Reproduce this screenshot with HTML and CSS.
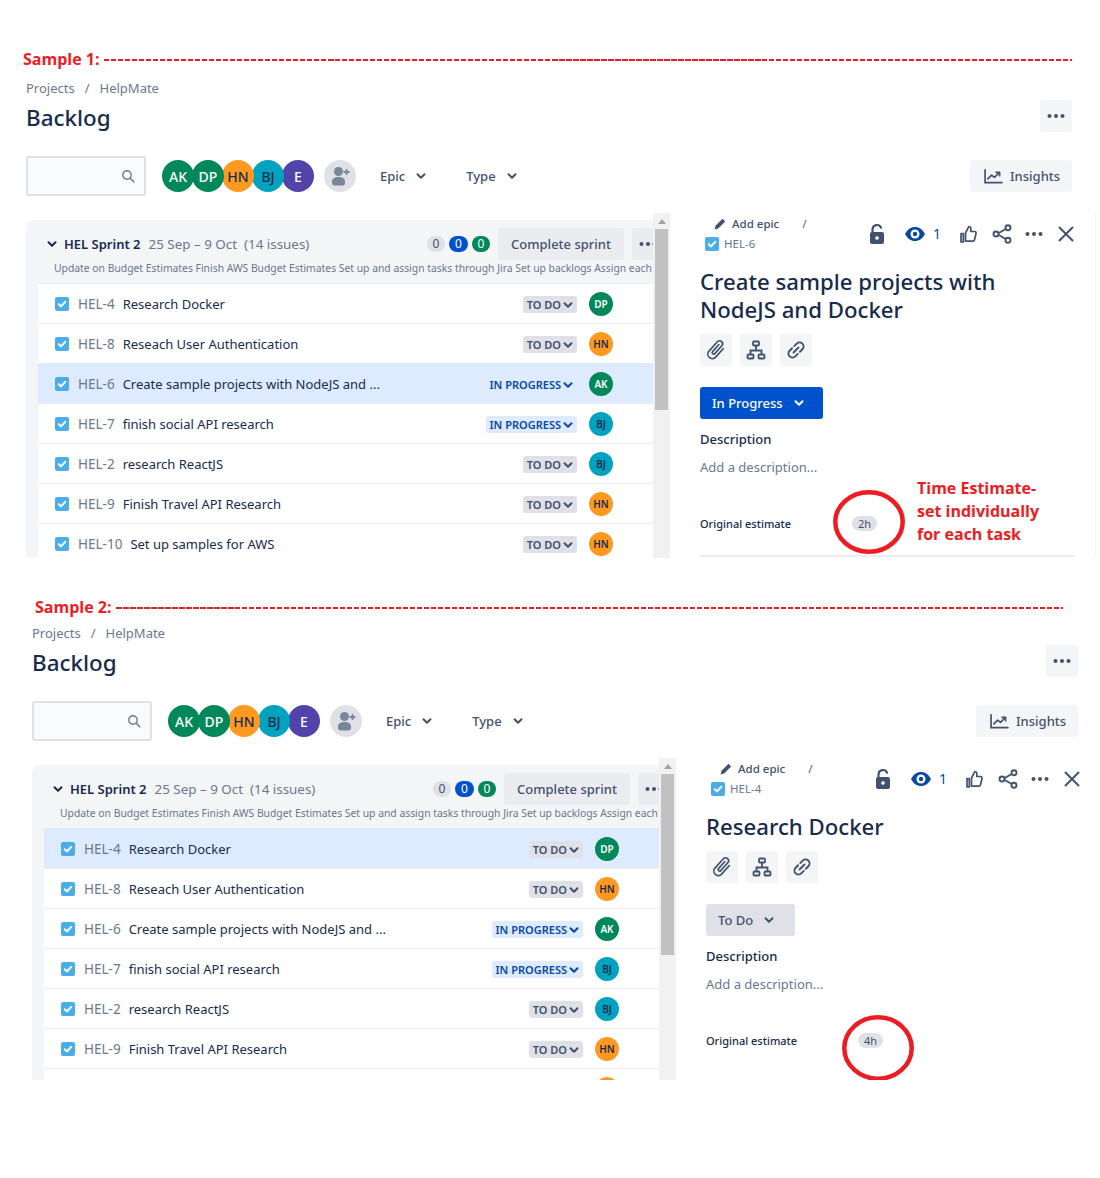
FILE: index.html
```html
<!DOCTYPE html>
<html lang="en">
<head>
<meta charset="UTF-8">
<meta name="viewport" content="width=device-width, initial-scale=1.0">
<title>Backlog samples</title>
<link rel="stylesheet" href="styles.css">
</head>
<body>
	<!-- shared icons -->
	<svg class="icon-sprite" aria-hidden="true">
		<symbol id="i-task" viewBox="0 0 14 14"><rect width="14" height="14" rx="2" fill="#4bade8"/><path d="M3.8 7.2l2.2 2.2 4.2-4.6" fill="none" stroke="#fff" stroke-width="2" stroke-linecap="round" stroke-linejoin="round"/></symbol>
		<symbol id="i-chevron" viewBox="0 0 10 10"><path d="M1.5 3.2L5 6.7l3.5-3.5" fill="none" stroke="currentColor" stroke-width="2" stroke-linecap="round" stroke-linejoin="round"/></symbol>
		<symbol id="i-search" viewBox="0 0 14 14"><circle cx="6" cy="6" r="4.2" fill="none" stroke="currentColor" stroke-width="1.4"/><path d="M9.2 9.2l3.6 3.6" stroke="currentColor" stroke-width="1.6" stroke-linecap="round"/></symbol>
		<symbol id="i-add-user" viewBox="0 0 32 32"><circle cx="16" cy="16" r="16" fill="#dfe1e6"/><circle cx="14.500" cy="11.500" r="4.500" fill="#7a869a"/><path d="M8 21.500c0-3 2.500-4.500 6.500-4.500s6.500 1.500 6.500 4.500v1.500c0 1.600-1 2.500-2.500 2.500h-8C9 25.500 8 24.600 8 23z" fill="#7a869a"/><path d="M22.500 9v6M19.500 12h6" stroke="#7a869a" stroke-width="1.800"/></symbol>
		<symbol id="i-insights" viewBox="0 0 20 16"><path d="M1 1v13.500h18" fill="none" stroke="currentColor" stroke-width="1.800" stroke-linecap="round"/><path d="M4 10.500l4-4 3 2.500 5-5M12.800 3.500h3.700v3.700" fill="none" stroke="currentColor" stroke-width="1.800" stroke-linecap="round" stroke-linejoin="round"/></symbol>
		<symbol id="i-dots" viewBox="0 0 24 24"><circle cx="5.500" cy="12" r="2" fill="currentColor"/><circle cx="12" cy="12" r="2" fill="currentColor"/><circle cx="18.500" cy="12" r="2" fill="currentColor"/></symbol>
		<symbol id="i-pencil" viewBox="0 0 12 12"><path d="M8.500.8l2.700 2.700-7 7L.6 11.400l.9-3.600z" fill="currentColor"/></symbol>
		<symbol id="i-lock" viewBox="0 0 24 24"><path d="M7.500 11V7.500a4.500 4.500 0 0 1 8.600-1.800" fill="none" stroke="currentColor" stroke-width="2.200" stroke-linecap="round"/><rect x="5" y="10" width="14" height="12" rx="2" fill="currentColor"/><circle cx="12" cy="16" r="1.800" fill="#fff"/></symbol>
		<symbol id="i-eye" viewBox="0 0 24 24"><path d="M2 12c2.400-4.600 5.800-7 10-7s7.600 2.400 10 7c-2.400 4.600-5.800 7-10 7s-7.600-2.400-10-7z" fill="#0747a6"/><circle cx="12" cy="12" r="4.500" fill="#fff"/><circle cx="12" cy="12" r="2.200" fill="#0747a6"/></symbol>
		<symbol id="i-thumb" viewBox="0 0 24 24"><path d="M9.500 11l3-5.800c.5-.9 2.300-.5 2.300 1.200v3.100h3.700c1.100 0 1.800 1 1.500 2l-1.500 6.300c-.2.800-.9 1.400-1.700 1.400H9.500zM5 11.500h2.300v8.500H5z" fill="none" stroke="currentColor" stroke-width="1.700" stroke-linejoin="round"/></symbol>
		<symbol id="i-share" viewBox="0 0 24 24"><path d="M7 12l10-5.800M7 12l10 5.800" stroke="currentColor" stroke-width="1.900"/><circle cx="6" cy="12" r="2.500" fill="#fff" stroke="currentColor" stroke-width="1.900"/><circle cx="18" cy="5.700" r="2.500" fill="#fff" stroke="currentColor" stroke-width="1.900"/><circle cx="18" cy="18.300" r="2.500" fill="#fff" stroke="currentColor" stroke-width="1.900"/></symbol>
		<symbol id="i-close" viewBox="0 0 24 24"><path d="M5.500 5.500l13 13M18.500 5.500l-13 13" stroke="currentColor" stroke-width="2" stroke-linecap="round"/></symbol>
		<symbol id="i-clip" viewBox="0 0 24 24"><path d="M16.500 6v11.500a4.500 4.500 0 0 1-9 0V5a3 3 0 0 1 6 0v10.500a1.500 1.500 0 0 1-3 0V6" transform="rotate(42 12 12)" fill="none" stroke="currentColor" stroke-width="1.700" stroke-linecap="round"/></symbol>
		<symbol id="i-tree" viewBox="0 0 24 24"><path d="M12 8v4.500M6.500 16.500v-4h11v4" fill="none" stroke="currentColor" stroke-width="1.800"/><rect x="9" y="3.500" width="6" height="4" rx="1" fill="none" stroke="currentColor" stroke-width="1.800"/><rect x="3.500" y="16.500" width="6" height="4" rx="1" fill="none" stroke="currentColor" stroke-width="1.800"/><rect x="14.500" y="16.500" width="6" height="4" rx="1" fill="none" stroke="currentColor" stroke-width="1.800"/></symbol>
		<symbol id="i-link" viewBox="0 0 24 24"><g transform="rotate(-45 12 12)" fill="none" stroke="currentColor" stroke-width="1.900" stroke-linecap="round"><path d="M10.500 8H7a4 4 0 0 0 0 8h3.500"/><path d="M13.500 8H17a4 4 0 0 1 0 8h-3.500"/><path d="M8.500 12h7"/></g></symbol>
	</svg>

	<section class="sample sample-one">
		<div class="sample-label"><span>Sample 1:</span><i class="dashes"></i></div>
		<div class="screen">
			<header class="page-head">
				<div>
					<div class="crumbs"><span>Projects</span><span>/</span><span>HelpMate</span></div>
					<h1>Backlog</h1>
				</div>
				<button class="soft-btn square"><svg class="ico-24"><use href="#i-dots"/></svg></button>
			</header>

			<div class="toolbar">
				<div class="search"><svg class="ico-14"><use href="#i-search"/></svg></div>
				<div class="people">
					<span class="avatar green">AK</span>
					<span class="avatar green">DP</span>
					<span class="avatar orange">HN</span>
					<span class="avatar teal">BJ</span>
					<span class="avatar purple">E</span>
				</div>
				<svg class="add-user"><use href="#i-add-user"/></svg>
				<span class="filter">Epic <svg class="ico-10"><use href="#i-chevron"/></svg></span>
				<span class="filter">Type <svg class="ico-10"><use href="#i-chevron"/></svg></span>
				<button class="soft-btn insights"><svg class="ico-insights"><use href="#i-insights"/></svg>Insights</button>
			</div>

			<div class="board">
				<div class="backlog">
					<div class="sprint">
						<div class="sprint-head">
							<svg class="ico-10 sprint-toggle"><use href="#i-chevron"/></svg>
							<strong>HEL Sprint 2</strong>
							<span class="sprint-dates">25 Sep – 9 Oct&nbsp; (14 issues)</span>
							<div class="sprint-actions">
								<span class="count">0</span>
								<span class="count blue">0</span>
								<span class="count green">0</span>
								<button class="soft-btn darker complete">Complete sprint</button>
								<button class="soft-btn darker square"><svg class="ico-24"><use href="#i-dots"/></svg></button>
							</div>
						</div>
						<p class="sprint-goal">Update on Budget Estimates Finish AWS Budget Estimates Set up and assign tasks through Jira Set up backlogs Assign each</p>

						<div class="issue"><svg class="ico-14"><use href="#i-task"/></svg><span class="key">HEL-4</span><span class="summary">Research Docker</span><span class="pill">TO DO <svg class="ico-10"><use href="#i-chevron"/></svg></span><span class="avatar small green">DP</span></div>
						<div class="issue"><svg class="ico-14"><use href="#i-task"/></svg><span class="key">HEL-8</span><span class="summary">Reseach User Authentication</span><span class="pill">TO DO <svg class="ico-10"><use href="#i-chevron"/></svg></span><span class="avatar small orange">HN</span></div>
						<div class="issue selected"><svg class="ico-14"><use href="#i-task"/></svg><span class="key">HEL-6</span><span class="summary">Create sample projects with NodeJS and ...</span><span class="pill progress">IN PROGRESS <svg class="ico-10"><use href="#i-chevron"/></svg></span><span class="avatar small green">AK</span></div>
						<div class="issue"><svg class="ico-14"><use href="#i-task"/></svg><span class="key">HEL-7</span><span class="summary">finish social API research</span><span class="pill progress">IN PROGRESS <svg class="ico-10"><use href="#i-chevron"/></svg></span><span class="avatar small teal">BJ</span></div>
						<div class="issue"><svg class="ico-14"><use href="#i-task"/></svg><span class="key">HEL-2</span><span class="summary">research ReactJS</span><span class="pill">TO DO <svg class="ico-10"><use href="#i-chevron"/></svg></span><span class="avatar small teal">BJ</span></div>
						<div class="issue"><svg class="ico-14"><use href="#i-task"/></svg><span class="key">HEL-9</span><span class="summary">Finish Travel API Research</span><span class="pill">TO DO <svg class="ico-10"><use href="#i-chevron"/></svg></span><span class="avatar small orange">HN</span></div>
						<div class="issue"><svg class="ico-14"><use href="#i-task"/></svg><span class="key">HEL-10</span><span class="summary">Set up samples for AWS</span><span class="pill">TO DO <svg class="ico-10"><use href="#i-chevron"/></svg></span><span class="avatar small orange">HN</span></div>
					</div>
					<div class="scrollbar"><i class="scroll-arrow"></i><i class="scroll-thumb"></i></div>
				</div>

				<aside class="detail">
					<div class="detail-head">
						<div class="detail-path">
							<div class="add-epic"><svg class="ico-12"><use href="#i-pencil"/></svg><span>Add epic</span><span class="slash">/</span></div>
							<div class="detail-key"><svg class="ico-14"><use href="#i-task"/></svg>HEL-6</div>
						</div>
						<div class="detail-icons">
							<svg class="ico-24"><use href="#i-lock"/></svg>
							<svg class="ico-24 eye"><use href="#i-eye"/></svg>
							<span class="watchers">1</span>
							<svg class="ico-24 thumb"><use href="#i-thumb"/></svg>
							<svg class="ico-24 share"><use href="#i-share"/></svg>
							<svg class="ico-24 more"><use href="#i-dots"/></svg>
							<svg class="ico-24 more"><use href="#i-close"/></svg>
						</div>
					</div>
					<h2>Create sample projects with NodeJS and Docker</h2>
					<div class="quick-actions">
						<button class="soft-btn square"><svg class="ico-24"><use href="#i-clip"/></svg></button>
						<button class="soft-btn square"><svg class="ico-24"><use href="#i-tree"/></svg></button>
						<button class="soft-btn square"><svg class="ico-24"><use href="#i-link"/></svg></button>
					</div>
					<button class="status-btn in-progress">In Progress <svg class="ico-10"><use href="#i-chevron"/></svg></button>
					<h3>Description</h3>
					<p class="placeholder">Add a description...</p>
					<div class="estimate">
						<span class="estimate-label">Original estimate</span>
						<span class="estimate-value">2h</span>
						<svg class="ring" viewBox="0 0 72 64"><ellipse cx="36" cy="32" rx="33.700" ry="29.700" fill="none" stroke="#ed1c24" stroke-width="4.500"/></svg>
						<p class="note">Time Estimate-<br>set individually<br>for each task</p>
					</div>
					<div class="detail-rule"></div>
				</aside>
			</div>
		</div>
	</section>

	<section class="sample sample-two">
		<div class="sample-label"><span>Sample 2:</span><i class="dashes"></i></div>
		<div class="screen">
			<header class="page-head">
				<div>
					<div class="crumbs"><span>Projects</span><span>/</span><span>HelpMate</span></div>
					<h1>Backlog</h1>
				</div>
				<button class="soft-btn square"><svg class="ico-24"><use href="#i-dots"/></svg></button>
			</header>

			<div class="toolbar">
				<div class="search"><svg class="ico-14"><use href="#i-search"/></svg></div>
				<div class="people">
					<span class="avatar green">AK</span>
					<span class="avatar green">DP</span>
					<span class="avatar orange">HN</span>
					<span class="avatar teal">BJ</span>
					<span class="avatar purple">E</span>
				</div>
				<svg class="add-user"><use href="#i-add-user"/></svg>
				<span class="filter">Epic <svg class="ico-10"><use href="#i-chevron"/></svg></span>
				<span class="filter">Type <svg class="ico-10"><use href="#i-chevron"/></svg></span>
				<button class="soft-btn insights"><svg class="ico-insights"><use href="#i-insights"/></svg>Insights</button>
			</div>

			<div class="board">
				<div class="backlog">
					<div class="sprint">
						<div class="sprint-head">
							<svg class="ico-10 sprint-toggle"><use href="#i-chevron"/></svg>
							<strong>HEL Sprint 2</strong>
							<span class="sprint-dates">25 Sep – 9 Oct&nbsp; (14 issues)</span>
							<div class="sprint-actions">
								<span class="count">0</span>
								<span class="count blue">0</span>
								<span class="count green">0</span>
								<button class="soft-btn darker complete">Complete sprint</button>
								<button class="soft-btn darker square"><svg class="ico-24"><use href="#i-dots"/></svg></button>
							</div>
						</div>
						<p class="sprint-goal">Update on Budget Estimates Finish AWS Budget Estimates Set up and assign tasks through Jira Set up backlogs Assign each</p>

						<div class="issue selected"><svg class="ico-14"><use href="#i-task"/></svg><span class="key">HEL-4</span><span class="summary">Research Docker</span><span class="pill">TO DO <svg class="ico-10"><use href="#i-chevron"/></svg></span><span class="avatar small green">DP</span></div>
						<div class="issue"><svg class="ico-14"><use href="#i-task"/></svg><span class="key">HEL-8</span><span class="summary">Reseach User Authentication</span><span class="pill">TO DO <svg class="ico-10"><use href="#i-chevron"/></svg></span><span class="avatar small orange">HN</span></div>
						<div class="issue"><svg class="ico-14"><use href="#i-task"/></svg><span class="key">HEL-6</span><span class="summary">Create sample projects with NodeJS and ...</span><span class="pill progress">IN PROGRESS <svg class="ico-10"><use href="#i-chevron"/></svg></span><span class="avatar small green">AK</span></div>
						<div class="issue"><svg class="ico-14"><use href="#i-task"/></svg><span class="key">HEL-7</span><span class="summary">finish social API research</span><span class="pill progress">IN PROGRESS <svg class="ico-10"><use href="#i-chevron"/></svg></span><span class="avatar small teal">BJ</span></div>
						<div class="issue"><svg class="ico-14"><use href="#i-task"/></svg><span class="key">HEL-2</span><span class="summary">research ReactJS</span><span class="pill">TO DO <svg class="ico-10"><use href="#i-chevron"/></svg></span><span class="avatar small teal">BJ</span></div>
						<div class="issue"><svg class="ico-14"><use href="#i-task"/></svg><span class="key">HEL-9</span><span class="summary">Finish Travel API Research</span><span class="pill">TO DO <svg class="ico-10"><use href="#i-chevron"/></svg></span><span class="avatar small orange">HN</span></div>
						<div class="issue"><span class="spacer"></span><span class="avatar small orange"></span></div>
					</div>
					<div class="scrollbar"><i class="scroll-arrow"></i><i class="scroll-thumb"></i></div>
				</div>

				<aside class="detail">
					<div class="detail-head">
						<div class="detail-path">
							<div class="add-epic"><svg class="ico-12"><use href="#i-pencil"/></svg><span>Add epic</span><span class="slash">/</span></div>
							<div class="detail-key"><svg class="ico-14"><use href="#i-task"/></svg>HEL-4</div>
						</div>
						<div class="detail-icons">
							<svg class="ico-24"><use href="#i-lock"/></svg>
							<svg class="ico-24 eye"><use href="#i-eye"/></svg>
							<span class="watchers">1</span>
							<svg class="ico-24 thumb"><use href="#i-thumb"/></svg>
							<svg class="ico-24 share"><use href="#i-share"/></svg>
							<svg class="ico-24 more"><use href="#i-dots"/></svg>
							<svg class="ico-24 more"><use href="#i-close"/></svg>
						</div>
					</div>
					<h2>Research Docker</h2>
					<div class="quick-actions">
						<button class="soft-btn square"><svg class="ico-24"><use href="#i-clip"/></svg></button>
						<button class="soft-btn square"><svg class="ico-24"><use href="#i-tree"/></svg></button>
						<button class="soft-btn square"><svg class="ico-24"><use href="#i-link"/></svg></button>
					</div>
					<button class="status-btn to-do">To Do <svg class="ico-10"><use href="#i-chevron"/></svg></button>
					<h3>Description</h3>
					<p class="placeholder">Add a description...</p>
					<div class="estimate">
						<span class="estimate-label">Original estimate</span>
						<span class="estimate-value">4h</span>
						<svg class="ring ring-two" viewBox="0 0 72 66"><ellipse cx="36" cy="33" rx="33.700" ry="30.700" fill="none" stroke="#ed1c24" stroke-width="4.500"/></svg>
					</div>
				</aside>
			</div>
		</div>
	</section>
</body>
</html>
```

FILE: styles.css
```css
* {
	box-sizing: border-box;
}

body {
	font-family: "Noto Sans", sans-serif;
	margin: 0;
	padding: 0 0 98px;
	background-color: white;
	color: #172b4d;
}

h1, h2, h3, p {
	margin: 0;
}

button {
	font-family: inherit;
	border: none;
	cursor: pointer;
}

svg {
	display: block;
	flex-shrink: 0;
}

.icon-sprite {
	display: none;
}

.ico-10 { width: 10px; height: 10px; }
.ico-12 { width: 12px; height: 12px; }
.ico-14 { width: 14px; height: 14px; }
.ico-24 { width: 24px; height: 24px; }

/* red hand-drawn annotations */
.sample {
	overflow: hidden;
}

.sample-one {
	padding: 50px 0 0 26px;
	height: 558px;
}

.sample-two {
	padding: 6px 0 0 32px;
	margin-top: 34px;
	height: 488px;
}

.sample-label {
	display: flex;
	align-items: center;
	height: 18px;
	gap: 4px;
	color: #ed1c24;
	font-family: "Open Sans", sans-serif;
	font-size: 16px;
	font-weight: 700;
	line-height: 18px;
}

.sample-one .sample-label {
	margin-left: -3px;
	width: 1049px;
}

.sample-two .sample-label {
	margin-left: 3px;
	width: 1028px;
}

.dashes {
	flex: 1;
	height: 2px;
	margin-top: 2px;
	background: repeating-linear-gradient(90deg, #ed1c24 0 5.5px, transparent 5.5px 7px);
}

.screen {
	width: 1070px;
	margin-top: 10px;
	display: flex;
	flex-direction: column;
}

.sample-one .screen { height: 480px; overflow: hidden; }
.sample-two .screen { height: 457px; margin-top: 7px; overflow: hidden; }

/* page header */
.page-head {
	display: flex;
	justify-content: space-between;
	align-items: flex-end;
	width: 1046px;
}

.crumbs {
	display: flex;
	gap: 10px;
	font-size: 13px;
	line-height: 20px;
	color: #6b778c;
}

h1 {
	margin-top: 6px;
	font-size: 22.400px;
	line-height: 28px;
	font-weight: 500;
}

.soft-btn {
	display: flex;
	align-items: center;
	justify-content: center;
	background-color: #f4f5f7;
	color: #42526e;
	border-radius: 3px;
	font-size: 13px;
	font-weight: 500;
}

.soft-btn.square {
	width: 32px;
	height: 32px;
	padding: 0;
}

.soft-btn.darker {
	background-color: #ebecf0;
}

/* filter row */
.toolbar {
	display: flex;
	align-items: center;
	width: 1046px;
	height: 40px;
	margin-top: 24px;
}

.search {
	display: flex;
	align-items: center;
	justify-content: flex-end;
	width: 120px;
	height: 40px;
	padding-right: 9px;
	background-color: #fafbfc;
	border: 2px solid #dfe1e6;
	border-radius: 3px;
	color: #6b778c;
}

.people {
	display: flex;
	margin-left: 16px;
}

.avatar {
	display: flex;
	align-items: center;
	justify-content: center;
	position: relative;
	width: 32px;
	height: 32px;
	border-radius: 50%;
	font-size: 14px;
	font-weight: 500;
	color: white;
	flex-shrink: 0;
}

.people .avatar + .avatar {
	margin-left: -2px;
}

.people .avatar:nth-child(1) { z-index: 5; }
.people .avatar:nth-child(2) { z-index: 4; }
.people .avatar:nth-child(3) { z-index: 3; }
.people .avatar:nth-child(4) { z-index: 2; }

.avatar.green { background-color: #00875a; }
.avatar.orange { background-color: #ff991f; color: #172b4d; }
.avatar.teal { background-color: #00a3bf; color: #172b4d; }
.avatar.purple { background-color: #5243aa; }

.avatar.small {
	width: 24px;
	height: 24px;
	font-size: 10px;
	font-weight: 600;
}

.add-user {
	width: 32px;
	height: 32px;
	margin-left: 10px;
}

.filter {
	display: flex;
	align-items: center;
	gap: 11px;
	font-size: 13px;
	font-weight: 500;
	color: #42526e;
	margin-left: 24px;
}

.filter + .filter {
	margin-left: 40px;
}

.insights {
	justify-content: flex-start;
	gap: 7px;
	width: 102px;
	height: 32px;
	margin-left: auto;
	padding-left: 14px;
}

.ico-insights {
	width: 19px;
	height: 15px;
}

/* backlog column */
.board {
	display: flex;
	flex: 1;
	min-height: 0;
	margin-top: 17px;
}

.backlog {
	display: flex;
	width: 644px;
	flex-shrink: 0;
}

.sprint {
	width: 627px;
	margin-top: 7px;
	padding-left: 12px;
	overflow: hidden;
	background-color: #f4f5f7;
	border-radius: 8px 0 0 0;
}

.sprint-head {
	display: flex;
	align-items: center;
	height: 32px;
	margin-top: 8px;
	margin-right: -11px;
	padding-left: 9px;
	font-size: 13px;
}

.sprint-toggle {
	color: #172b4d;
	margin-right: 7px;
}

.sprint-head strong {
	font-weight: 600;
}

.sprint-dates {
	margin-left: 8px;
	font-size: 13.400px;
	color: #6b778c;
}

.sprint-actions {
	display: flex;
	align-items: center;
	gap: 4px;
	margin-left: auto;
}

.count {
	width: 18px;
	height: 16px;
	line-height: 16px;
	text-align: center;
	border-radius: 8px;
	font-size: 12px;
	background-color: #dfe1e6;
	color: #42526e;
}

.count.blue {
	width: 19px;
	background-color: #0052cc;
	color: white;
}

.count.green {
	background-color: #00875a;
	color: white;
}

.complete {
	width: 126px;
	height: 32px;
	margin-left: 4px;
	margin-right: 4px;
}

.sprint-goal {
	height: 23px;
	padding-left: 16px;
	font-size: 10.350px;
	line-height: 16px;
	color: #6b778c;
	white-space: nowrap;
}

.issue {
	display: flex;
	align-items: center;
	height: 40px;
	padding: 0 40px 0 17px;
	background-color: white;
	border-top: 1px solid #ebecf0;
	font-size: 13px;
}

.issue.selected {
	background-color: #deebff;
	border-top-color: #deebff;
}

.key {
	margin-left: 9px;
	font-size: 13.500px;
	color: #6b778c;
}

.summary {
	margin-left: 8px;
}

.spacer {
	flex: 1;
}

.pill {
	display: flex;
	align-items: center;
	gap: 2px;
	height: 17px;
	margin-top: 2px;
	margin-left: auto;
	margin-right: 12px;
	padding: 0 4px;
	border-radius: 3px;
	font-size: 11px;
	font-weight: 600;
	background-color: #dfe1e6;
	color: #42526e;
}

.pill.progress {
	background-color: #deebff;
	color: #0747a6;
}

.scrollbar {
	display: flex;
	flex-direction: column;
	align-items: center;
	width: 17px;
	background-color: #f1f1f1;
}

.scroll-arrow {
	margin-top: 6px;
	margin-bottom: 5px;
	border-left: 4px solid transparent;
	border-right: 4px solid transparent;
	border-bottom: 5px solid #a3a3a3;
}

.scroll-thumb {
	width: 13px;
	height: 181px;
	background-color: #c1c1c1;
}

/* issue detail column */
.detail {
	width: 396px;
	margin-left: 30px;
	padding-right: 17px;
	border-right: 1px solid #f4f5f7;
	flex-shrink: 0;
}

.detail-head {
	display: flex;
	justify-content: space-between;
}

.add-epic {
	display: flex;
	align-items: center;
	gap: 6px;
	height: 21px;
	padding-left: 14px;
	font-size: 11.500px;
	font-weight: 500;
	color: #42526e;
}

.slash {
	margin-left: 17px;
	color: #6b778c;
}

.detail-key {
	display: flex;
	align-items: center;
	gap: 5px;
	height: 19px;
	padding-left: 5px;
	font-size: 11.500px;
	color: #6b778c;
}

.detail-icons {
	display: flex;
	align-items: center;
	height: 41px;
	color: #42526e;
}

.eye { margin-left: 14px; }
.thumb { margin-left: 15px; }
.share { margin-left: 10px; }
.more { margin-left: 8px; }

.watchers {
	width: 8px;
	margin-left: 6px;
	font-size: 14px;
	color: #0747a6;
}

h2 {
	max-width: 330px;
	margin-top: 14px;
	font-size: 22.200px;
	line-height: 28px;
	font-weight: 500;
}

.quick-actions {
	display: flex;
	gap: 8px;
	margin-top: 10px;
}

.status-btn {
	display: flex;
	align-items: center;
	gap: 11px;
	height: 32px;
	margin-top: 21px;
	padding: 0 19px 0 12px;
	border-radius: 3px;
	font-size: 13px;
	font-weight: 500;
}

.status-btn.in-progress {
	background-color: #0052cc;
	color: white;
}

.status-btn.to-do {
	background-color: #dfe1e6;
	color: #42526e;
	padding-right: 21px;
}

h3 {
	margin-top: 10px;
	font-size: 13px;
	line-height: 20px;
	font-weight: 500;
}

.placeholder {
	margin-top: 8px;
	font-size: 13px;
	line-height: 20px;
	color: #6b778c;
}

.estimate {
	display: flex;
	align-items: center;
	position: relative;
	height: 16px;
	margin-top: 38px;
}

.estimate-label {
	width: 152px;
	font-size: 11px;
	font-weight: 500;
}

.estimate-value {
	width: 25px;
	height: 15px;
	line-height: 15px;
	text-align: center;
	border-radius: 8px;
	font-size: 11px;
	background-color: #dfe1e6;
	color: #42526e;
}

.ring {
	position: absolute;
	left: 133px;
	top: -25px;
	width: 72px;
	height: 64px;
}

.ring-two {
	left: 136px;
	top: -17px;
	height: 66px;
}

.note {
	position: absolute;
	left: 217px;
	top: -38px;
	font-family: "Open Sans", sans-serif;
	font-size: 16px;
	font-weight: 700;
	line-height: 23px;
	color: #ed1c24;
	white-space: nowrap;
}

.detail-rule {
	width: 375px;
	height: 2px;
	margin-top: 24px;
	background-color: #ebecf0;
}
```
